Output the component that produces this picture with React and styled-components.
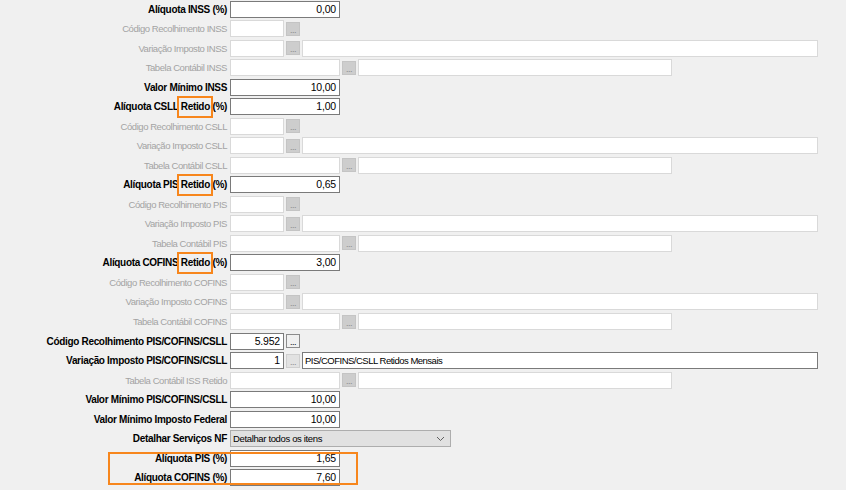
import React from "react";
import styled, { createGlobalStyle } from "styled-components";

const Global = createGlobalStyle`
  html, body {
    margin: 0;
    padding: 0;
    background: #f0f0f0;
  }
  body {
    font-family: "Liberation Sans", Arial, sans-serif;
  }
`;

// kind: value | code | variation | table
const rows = [
  { label: "Alíquota INSS (%)", kind: "value", value: "0,00", on: true },
  { label: "Código Recolhimento INSS", kind: "code" },
  { label: "Variação Imposto INSS", kind: "variation" },
  { label: "Tabela Contábil INSS", kind: "table" },
  { label: "Valor Mínimo INSS", kind: "value", value: "10,00", on: true },
  { label: ["Alíquota CSLL ", "Retido", " (%)"], kind: "value", value: "1,00", on: true },
  { label: "Código Recolhimento CSLL", kind: "code" },
  { label: "Variação Imposto CSLL", kind: "variation" },
  { label: "Tabela Contábil CSLL", kind: "table" },
  { label: ["Alíquota PIS ", "Retido", " (%)"], kind: "value", value: "0,65", on: true },
  { label: "Código Recolhimento PIS", kind: "code" },
  { label: "Variação Imposto PIS", kind: "variation" },
  { label: "Tabela Contábil PIS", kind: "table" },
  { label: ["Alíquota COFINS ", "Retido", " (%)"], kind: "value", value: "3,00", on: true },
  { label: "Código Recolhimento COFINS", kind: "code" },
  { label: "Variação Imposto COFINS", kind: "variation" },
  { label: "Tabela Contábil COFINS", kind: "table" },
  { label: "Código Recolhimento PIS/COFINS/CSLL", kind: "code", value: "5.952", on: true },
  {
    label: "Variação Imposto PIS/COFINS/CSLL",
    kind: "variation",
    value: "1",
    text: "PIS/COFINS/CSLL Retidos Mensais",
    on: true,
  },
  { label: "Tabela Contábil ISS Retido", kind: "table" },
  { label: "Valor Mínimo PIS/COFINS/CSLL", kind: "value", value: "10,00", on: true },
  { label: "Valor Mínimo Imposto Federal", kind: "value", value: "10,00", on: true },
];

const tail = [
  { label: "Alíquota PIS (%)", value: "1,65" },
  { label: "Alíquota COFINS (%)", value: "7,60" },
];

const LabelText = ({ label }) => {
  if (Array.isArray(label)) {
    return (
      <>
        {label[0]}
        <Mark>{label[1]}</Mark>
        {label[2]}
      </>
    );
  }
  return label;
};

const Row = ({ row }) => {
  const on = !!row.on;
  return (
    <Line>
      <Label on={on}>
        <LabelText label={row.label} />
      </Label>
      {row.kind === "value" && <Field w={110} on={on}>{row.value}</Field>}
      {row.kind === "code" && (
        <>
          <Field w={54} on={on}>{row.value}</Field>
          <Dots on={on}>...</Dots>
        </>
      )}
      {row.kind === "variation" && (
        <>
          <Field w={54} on={on}>{row.value}</Field>
          <Dots soft={on}>...</Dots>
          <Wide on={on}>{row.text}</Wide>
        </>
      )}
      {row.kind === "table" && (
        <>
          <Field w={110} />
          <Dots>...</Dots>
          <Wide w={314} />
        </>
      )}
    </Line>
  );
};

const App = () => {
  return (
    <>
      <Global />
      <Page>
        {rows.map((r, i) => (
          <Row key={i} row={r} />
        ))}
        <Line>
          <Label on>Detalhar Serviços NF</Label>
          <Select>
            <span>Detalhar todos os itens</span>
            <svg width="9" height="6" viewBox="0 0 9 6">
              <path d="M1 1 L4.5 4.5 L8 1" fill="none" stroke="#606060" strokeWidth="1" />
            </svg>
          </Select>
        </Line>
        <Boxed>
          {tail.map((r, i) => (
            <Row key={i} row={{ ...r, kind: "value", on: true }} />
          ))}
        </Boxed>
      </Page>
    </>
  );
};
export default App;

const Page = styled.div`
  width: 846px;
  height: 490px;
  overflow: hidden;
  padding-top: 0.5px;
  box-sizing: border-box;
  display: flex;
  flex-direction: column;
  gap: 2.54px;
  background: #f0f0f0;
`;
const Line = styled.div`
  height: 17px;
  display: flex;
  flex-direction: row;
  align-items: center;
  gap: 2px;
`;
const Label = styled.div`
  width: 228px;
  box-sizing: border-box;
  text-align: right;
  white-space: nowrap;
  font-size: ${(p) => (p.on ? "10px" : "9.5px")};
  font-weight: ${(p) => (p.on ? 700 : 400)};
  letter-spacing: ${(p) => (p.on ? "-0.32px" : "-0.45px")};
  color: ${(p) => (p.on ? "#000" : "#a3a3a3")};
  padding-right: 1px;
`;
const Mark = styled.span`
  position: relative;
  &::after {
    content: "";
    position: absolute;
    left: -4px;
    right: -3px;
    top: -5px;
    bottom: -6px;
    border: 2px solid #f7861c;
  }
`;
const Field = styled.div`
  width: ${(p) => p.w}px;
  height: 17px;
  box-sizing: border-box;
  background: #fff;
  border: 1px solid ${(p) => (p.on ? "#7a7a7a" : "#d9d9d9")};
  font-size: 10.5px;
  line-height: 15px;
  text-align: right;
  padding-right: 3px;
  color: #000;
  letter-spacing: -0.2px;
`;
const Wide = styled.div`
  width: ${(p) => p.w || 516}px;
  height: 17px;
  box-sizing: border-box;
  background: #fff;
  border: 1px solid ${(p) => (p.on ? "#7a7a7a" : "#d9d9d9")};
  font-size: 9.5px;
  line-height: 15px;
  padding-left: 2px;
  color: #000;
  letter-spacing: -0.5px;
`;
const Dots = styled.div`
  width: 14px;
  height: 14px;
  box-sizing: border-box;
  display: flex;
  align-items: flex-end;
  justify-content: center;
  font-size: 9px;
  line-height: 10px;
  letter-spacing: -0.5px;
  background: ${(p) => (p.on ? "#f0f0f0" : p.soft ? "#e2e2e2" : "#cdcdcd")};
  border: 1px solid ${(p) => (p.on ? "#8c8c8c" : p.soft ? "#cfcfcf" : "#c4c4c4")};
  color: ${(p) => (p.on ? "#000" : "#8a8a8a")};
`;
const Select = styled.div`
  width: 221px;
  height: 17px;
  box-sizing: border-box;
  background: #e1e1e1;
  border: 1px solid #adadad;
  display: flex;
  align-items: center;
  justify-content: space-between;
  padding: 0 5px 0 2px;
  font-size: 9.5px;
  letter-spacing: -0.35px;
  color: #000;
`;
const Boxed = styled.div`
  position: relative;
  display: flex;
  flex-direction: column;
  gap: 2.54px;
  &::after {
    content: "";
    position: absolute;
    box-sizing: border-box;
    left: 108px;
    width: 250px;
    top: 2px;
    height: 33px;
    border: 2px solid #f7861c;
    pointer-events: none;
  }
`;
